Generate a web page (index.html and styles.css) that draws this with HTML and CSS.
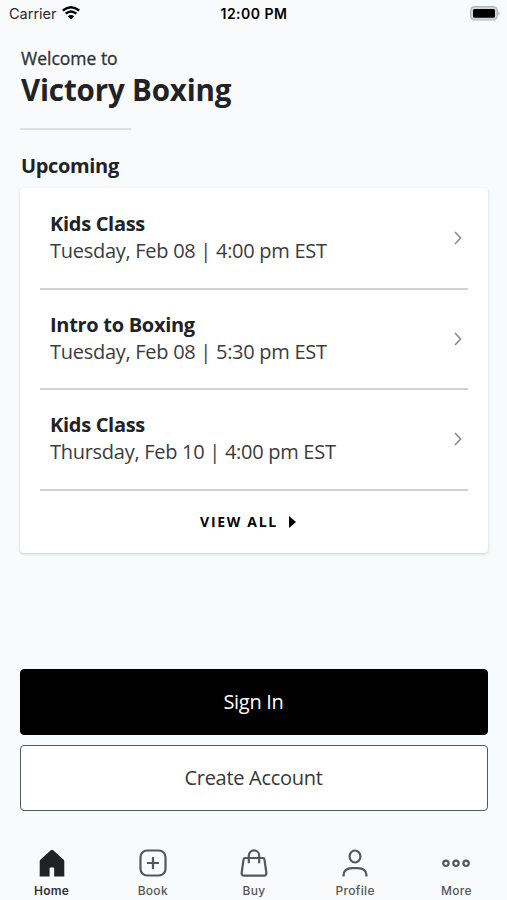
FILE: index.html
```html
<!DOCTYPE html>
<html lang="en">
<head>
<meta charset="utf-8">
<meta name="viewport" content="width=device-width, initial-scale=1">
<title>Victory Boxing</title>
<link rel="stylesheet" href="styles.css">
</head>
<body>
<div class="app">
  <header class="status">
    <div class="carrier"><span>Carrier</span>
      <svg width="18" height="14" viewBox="0 0 18 14"><path d="M.8 4.5Q9-2 17.200 4.500M3.700 7.700Q9 3.300 14.300 7.700" fill="none" stroke="#000" stroke-width="2.400"/><path d="M5.800 10.200Q9 7.600 12.200 10.200L9 13.500Z"/></svg>
    </div>
    <span class="clock">12:00 PM</span>
    <svg class="battery" width="31" height="15" viewBox="0 0 31 15"><rect x=".6" y=".6" width="26.600" height="13.400" rx="4" fill="#d4d5d6" stroke="#b4b5b6" stroke-width="1.200"/><rect x="3" y="3" width="22" height="8.800" rx="1.500"/><path d="M28.300 5Q31 7.300 28.300 9.600Z" fill="#aaabac"/></svg>
  </header>
  <main class="main">
    <p class="welcome">Welcome to</p>
    <h1 class="gym">Victory Boxing</h1>
    <div class="rule"></div>
    <h2 class="section">Upcoming</h2>
    <section class="card">
      <a class="class-row"><div><h3>Kids Class</h3><p>Tuesday, Feb 08 | 4:00 pm EST</p></div><svg width="8" height="14" viewBox="0 0 8 14"><path d="M1 1L6.600 7L1 13"/></svg></a>
      <a class="class-row"><div><h3>Intro to Boxing</h3><p>Tuesday, Feb 08 | 5:30 pm EST</p></div><svg width="8" height="14" viewBox="0 0 8 14"><path d="M1 1L6.600 7L1 13"/></svg></a>
      <a class="class-row"><div><h3>Kids Class</h3><p>Thursday, Feb 10 | 4:00 pm EST</p></div><svg width="8" height="14" viewBox="0 0 8 14"><path d="M1 1L6.600 7L1 13"/></svg></a>
      <a class="view-all"><span>VIEW ALL</span><svg width="7" height="12" viewBox="0 0 7 12"><path d="M0 0L7 6L0 12Z"/></svg></a>
    </section>
    <div class="actions">
      <button class="btn primary">Sign In</button>
      <button class="btn">Create Account</button>
    </div>
  </main>
  <nav class="tabs">
    <a class="tab active"><svg width="28" height="28" viewBox="0 0 28 28"><path d="M14 .7Q14.600 .7 15.200 1.300L25.400 10.600Q26.300 11.400 26.300 12.400V27.500H16.200V19.500Q16.200 18.500 15.200 18.500H12.600Q11.600 18.500 11.600 19.500V27.500H1.700V12.400Q1.700 11.400 2.600 10.600L12.800 1.300Q13.400 .7 14 .7Z" fill="#202226"/></svg><span>Home</span></a>
    <a class="tab"><svg width="28" height="28" viewBox="0 0 28 28"><rect x="1.500" y="1.500" width="25" height="25" rx="6.500"/><path d="M14 8V20M8 14H20"/></svg><span>Book</span></a>
    <a class="tab"><svg width="28" height="28" viewBox="0 0 28 28"><path d="M4.900 9H23.100Q24.200 9 24.400 10.200L26.300 23.500Q26.700 26.700 24 26.700H4Q1.300 26.700 1.700 23.500L3.600 10.200Q3.800 9 4.900 9ZM8.800 14.200V6.600A5.200 5.200 0 0 1 19.200 6.600V14.200"/></svg><span>Buy</span></a>
    <a class="tab"><svg width="28" height="28" viewBox="0 0 28 28"><ellipse cx="14" cy="7.500" rx="5.400" ry="6"/><path d="M2.600 27.500V25.500Q3.200 19.300 11 19.100H17Q24.800 19.300 25.400 25.500V27.500"/></svg><span>Profile</span></a>
    <a class="tab"><svg width="28" height="28" viewBox="0 0 28 28"><circle cx="3.900" cy="14.300" r="2.700"/><circle cx="14" cy="14.300" r="2.700"/><circle cx="24.100" cy="14.300" r="2.700"/></svg><span>More</span></a>
  </nav>
</div>
</body>
</html>
```
FILE: styles.css
```css
* { box-sizing: border-box; }
body, h1, h2, h3, p { margin: 0; }
body { background: #f9fafc; color: #202226; font-family: "Open Sans", "Noto Sans", sans-serif; }
svg { display: block; flex: none; }
.app { height: 900px; display: flex; flex-direction: column; overflow: hidden; }
.status { height: 28px; padding: 0 6px 0 9px; display: grid; grid-template-columns: 1fr auto 1fr; align-items: center; font: 14.5px/28px Inter, sans-serif; color: #000; }
.carrier { display: flex; align-items: center; gap: 5px; color: #27282a; }
.carrier svg { margin-top: -2px; }
.clock { font-weight: 600; font-size: 14px; letter-spacing: .5px; margin-left: -2px; }
.battery { justify-self: end; margin-top: -1px; }
.main { flex: 1; padding: 0 19px 0 20px; }
.welcome { height: 30px; line-height: 30px; margin-top: 15px; padding-left: 1px; font-size: 17.5px; color: #303236; -webkit-text-stroke: .3px #303236; }
.gym { height: 34px; line-height: 34px; padding-left: 1px; font-size: 29.5px; font-weight: 700; letter-spacing: -.15px; }
.rule { width: 111px; height: 2px; margin-top: 21px; background: #dcdee0; }
.section { height: 58px; line-height: 72px; padding-left: 1px; font-size: 20px; font-weight: 700; letter-spacing: -.35px; }
.card { height: 365px; padding: 1px 20px 0; background: #fff; border-radius: 4px; box-shadow: 0 1px 3px rgba(0, 0, 0, .18); }
.class-row { height: 100.6px; padding: 0 6px 0 10px; display: flex; justify-content: space-between; align-items: center; border-bottom: 2px solid #d0d1d2; }
.class-row div { padding-bottom: 2px; }
.class-row h3 { font-size: 20px; line-height: 27px; font-weight: 700; letter-spacing: -.3px; }
.class-row p { font-size: 20px; line-height: 27px; letter-spacing: -.28px; color: #3b3c3e; }
.class-row svg path { fill: none; stroke: #858789; stroke-width: 1.500; }
.view-all { height: 62px; display: flex; align-items: center; justify-content: center; gap: 11px; padding-right: 12px; font-size: 14px; font-weight: 700; letter-spacing: 1.7px; color: #000; }
.actions { margin-top: 116px; display: flex; flex-direction: column; gap: 10px; }
.btn { height: 66px; padding: 0 1px 1px 0; border: 1.500px solid #55575a; border-radius: 4px; background: #fff; color: #35373a; font: 20px "Open Sans", sans-serif; letter-spacing: -.3px; }
.btn.primary { background: #000; border-color: #000; color: #fff; }
.tabs { height: 51px; display: grid; grid-template-columns: repeat(5, 1fr); padding: 0 0 0 1px; }
.tab { display: flex; flex-direction: column; align-items: center; font: 500 12px/16px Inter, sans-serif; color: #55575b; letter-spacing: .3px; }
.tab svg { fill: none; stroke: #55575b; stroke-width: 2.200; }
.tab span { margin-top: 6px; }
.tab.active { color: #303236; font-weight: 600; }
.tab.active svg { stroke: none; }
```
